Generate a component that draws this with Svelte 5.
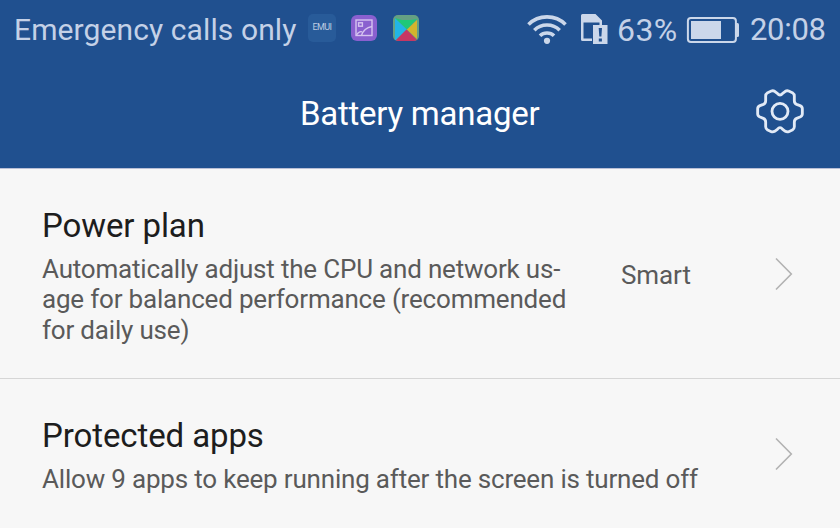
<script>
  const items = [
    {
      title: 'Power plan',
      lines: [
        'Automatically adjust the CPU and network us-',
        'age for balanced performance (recommended',
        'for daily use)'
      ],
      value: 'Smart'
    },
    {
      title: 'Protected apps',
      lines: ['Allow 9 apps to keep running after the screen is turned off'],
      value: ''
    }
  ];
</script>

<div class="screen">
  <header>
    <div class="status">
      <span class="carrier">Emergency calls only</span>
      <div class="notes">
        <span class="emui">EMUI</span>
        <svg width="28" height="28" viewBox="0 0 28 28">
          <rect x="1" y="1" width="26" height="26" rx="6" fill="#8a60cf" />
          <g fill="none" stroke="#d5c3f0" stroke-width="1.4">
            <rect x="6" y="6" width="16" height="15.5" />
            <rect x="8.6" y="8.8" width="3.8" height="3.4" />
            <path d="M6.500 21C8.500 17.800 10.500 17.300 12 17.800M11.500 21.500C13 16.500 16.500 13.500 22 12.500" />
          </g>
        </svg>
        <svg width="28" height="28" viewBox="0 0 28 28">
          <defs><clipPath id="store"><rect x="1" y="1" width="26" height="26" rx="5" /></clipPath></defs>
          <g clip-path="url(#store)">
            <rect width="28" height="28" fill="#65a083" />
            <path d="M3 4L15 15.500L3 27Z" fill="#22b5e6" />
            <path d="M3 4L10 6H19L25 5L15 15.500Z" fill="#1fc878" />
            <path d="M25 6V25L15 15.500Z" fill="#d3b52d" />
            <path d="M3 27L14.500 15.500L25 26V27Z" fill="#c63763" />
          </g>
        </svg>
      </div>
      <div class="system">
        <svg class="wifi" width="40" height="32" viewBox="0 0 40 32">
          <g fill="none" stroke="#cbd7ea" stroke-width="3.6">
            <path d="M1.500 11.500C11.500 1.300 28.500 1.300 38.500 11.500" />
            <path d="M7.300 17.200C14.200 10.300 25.800 10.300 32.700 17.200" />
            <path d="M13 22.700C16.800 19 23.200 19 27 22.700" />
          </g>
          <circle cx="20" cy="27.800" r="3.100" fill="#cbd7ea" />
        </svg>
        <svg class="sim" width="28" height="32" viewBox="0 0 28 32">
          <path d="M1 2.500Q1 1 2.500 1H15.500L22 7.500V13H19.500V9.500H3.500V25.500H12V28H2.500Q1 28 1 26.500Z" fill="#cbd7ea" />
          <rect x="13" y="12" width="14.500" height="19" fill="#cbd7ea" />
          <path d="M18.700 15H22L21.400 23.500H19.300ZM18.800 25.500H21.900V28.400H18.800Z" fill="#20508f" />
        </svg>
        <span class="pct">63%</span>
        <svg class="batt" width="54" height="28" viewBox="0 0 54 28">
          <rect x="1.900" y="2" width="48" height="24" rx="3" fill="none" stroke="#cbd7ea" stroke-width="2" />
          <rect x="5" y="5" width="30" height="18" fill="#cbd7ea" />
          <path d="M50 7H51.500Q53 7 53 8.500V19.500Q53 21 51.500 21H50Z" fill="#cbd7ea" />
        </svg>
        <span class="time">20:08</span>
      </div>
    </div>
    <div class="bar">
      <h1>Battery manager</h1>
      <svg class="gear" width="50" height="46" viewBox="45 38 150 138">
        <g fill="none" stroke="#e2eaf6" stroke-width="8.500" stroke-linejoin="round">
          <path d="M120 59Q124 59 128 54L136 48Q141 45 146 47L157 52Q163 56 163 62V76Q163 84 170 87L180 91Q187 94 187 100V116Q187 122 180 125L170 129Q163 132 163 140V154Q163 160 157 164L146 169Q141 171 136 168L128 162Q124 157 120 157Q116 157 112 162L104 168Q99 171 94 169L83 164Q77 160 77 154V140Q77 132 70 129L60 125Q53 122 53 116V100Q53 94 60 91L70 87Q77 84 77 76V62Q77 56 83 52L94 47Q99 45 104 48L112 54Q116 59 120 59Z" />
          <circle cx="120" cy="108" r="24" />
        </g>
      </svg>
    </div>
  </header>
  <main>
    {#each items as item}
      <section>
        <div class="copy">
          <h2>{item.title}</h2>
          <p>
            {#each item.lines as line}<span>{line}</span>{/each}
          </p>
        </div>
        {#if item.value}<span class="value">{item.value}</span>{/if}
        <svg class="chevron" width="18" height="34" viewBox="0 0 18 34">
          <path d="M1 1.500L16.300 17L1 32.500" fill="none" stroke="#b2b2b2" stroke-width="1.600" />
        </svg>
      </section>
    {/each}
  </main>
</div>

<style>
  .screen {
    width: 840px;
    height: 528px;
    overflow: hidden;
    background: #f7f7f7;
    font-family: Roboto, sans-serif;
    white-space: nowrap;
  }
  svg { display: block; flex: none; }
  header {
    box-sizing: border-box;
    height: 169px;
    background: #20508f;
    border-bottom: 1px solid #b9bfd6;
  }
  .status {
    display: flex;
    align-items: center;
    height: 60px;
    padding: 0 15px 0 14px;
    color: #c4d1e7;
    font-size: 30px;
    line-height: 60px;
  }
  .carrier { width: 294px; letter-spacing: 0.1px; }
  .notes { display: flex; gap: 14px; margin-top: -4px; }
  .emui {
    box-sizing: border-box;
    width: 28px;
    height: 28px;
    border-radius: 5px;
    background: #285b99;
    color: #bccce2;
    font-size: 9px;
    letter-spacing: -0.6px;
    line-height: 27px;
    text-align: center;
  }
  .system { display: flex; align-items: center; margin-left: auto; }
  .wifi { margin-right: 13px; margin-top: -3px; }
  .sim { margin-right: 9px; margin-top: -3px; }
  .pct { width: 61px; margin-right: 8px; font-size: 32px; letter-spacing: 0.4px; }
  .batt { margin-right: 10px; margin-top: -1px; }
  .time { width: 75px; font-size: 31px; letter-spacing: -0.3px; }
  .bar {
    display: flex;
    align-items: center;
    justify-content: space-between;
    height: 107px;
    padding: 0 35px 0 300px;
  }
  h1, h2, p { margin: 0; font-weight: 400; }
  h1 { color: #fff; font-size: 33px; line-height: 40px; letter-spacing: -0.25px; }
  .gear { margin-top: -5px; }
  section {
    box-sizing: border-box;
    display: flex;
    align-items: center;
    height: 210px;
    padding: 0 47px 0 42px;
    border-bottom: 1px solid #d6d6d6;
  }
  section:last-child { height: 149px; border-bottom: 0; }
  .copy { flex: 1; padding-top: 4px; }
  h2 {
    margin-bottom: 8px;
    color: #1d1d1d;
    font-size: 33px;
    line-height: 40px;
    letter-spacing: -0.1px;
  }
  p { color: #5a5a5a; font-size: 26px; line-height: 30.300px; letter-spacing: -0.19px; }
  p span { display: block; }
  .value {
    width: 154px;
    padding-top: 2px;
    color: #5a5a5a;
    font-size: 26px;
    line-height: 32px;
    letter-spacing: -0.1px;
  }
</style>
